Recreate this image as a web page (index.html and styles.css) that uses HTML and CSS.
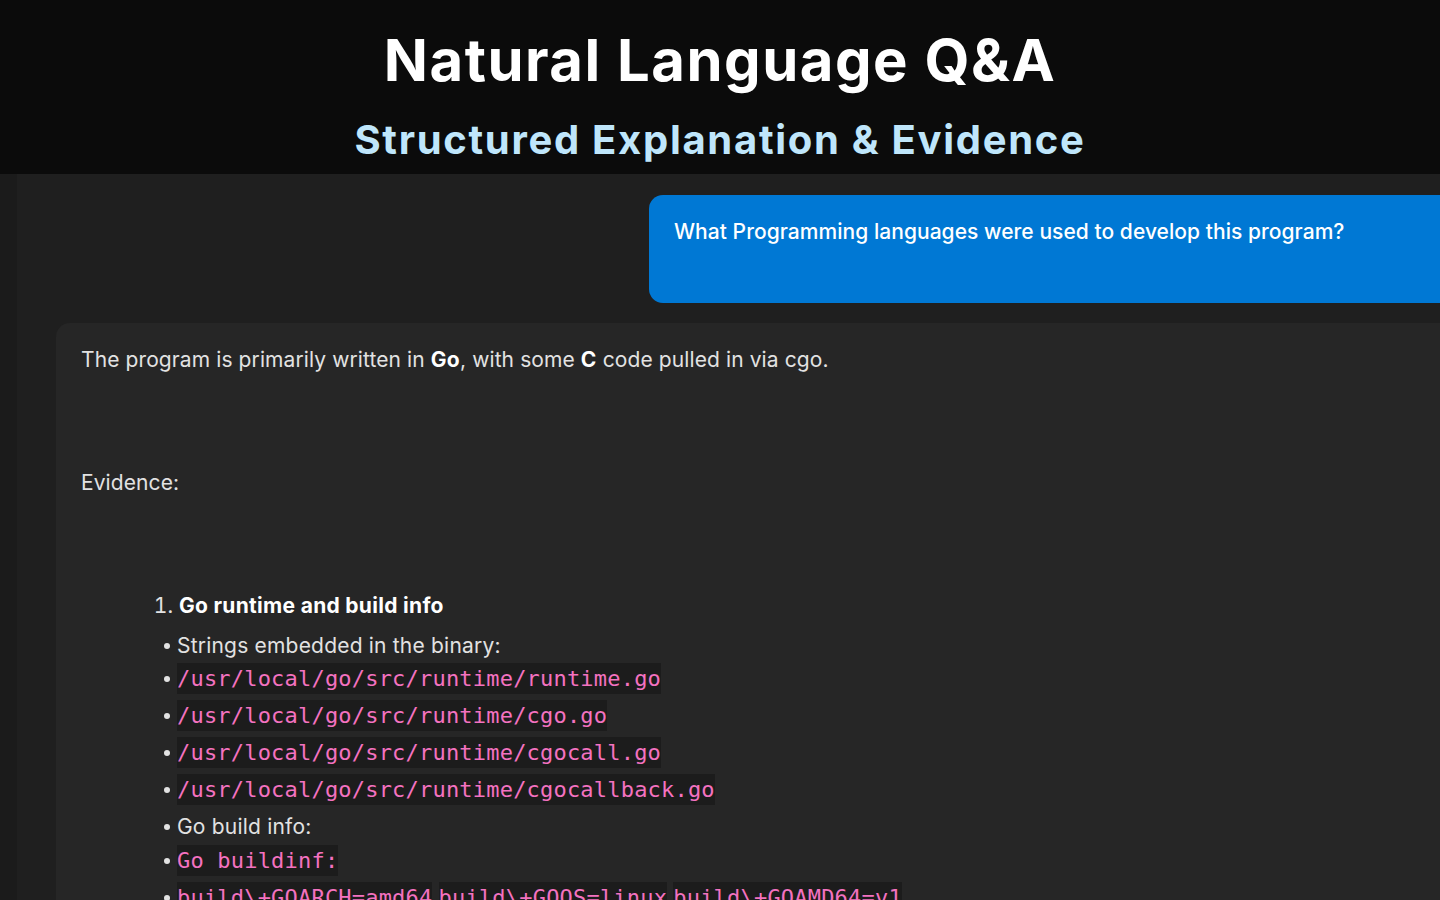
FILE: index.html
```html
<!DOCTYPE html>
<html lang="en">
<head>
    <meta charset="UTF-8">
    <meta name="viewport" content="width=device-width, initial-scale=1.0">
    <title>Natural Language Q&amp;A</title>
    <link rel="stylesheet" href="styles.css">
</head>
<body>
    <header class="hero">
        <h1>Natural Language Q&amp;A</h1>
        <h2>Structured Explanation &amp; Evidence</h2>
    </header>

    <div class="workspace">
        <div class="rail"></div>

        <!-- Chat thread -->
        <main class="chat">
            <div class="bubble-row">
                <div class="bubble">What Programming languages were used to develop this program?</div>
            </div>

            <div class="answer">
                <p>The program is primarily written in <strong>Go</strong>, with some <strong>C</strong> code pulled in via cgo.</p>
                <p class="gap">Evidence:</p>

                <ol class="evidence">
                    <li><strong>Go runtime and build info</strong></li>
                </ol>
                <ul class="points">
                    <li>Strings embedded in the binary:</li>
                    <li><code>/usr/local/go/src/runtime/runtime.go</code></li>
                    <li class="spaced"><code>/usr/local/go/src/runtime/cgo.go</code></li>
                    <li class="spaced"><code>/usr/local/go/src/runtime/cgocall.go</code></li>
                    <li class="spaced"><code>/usr/local/go/src/runtime/cgocallback.go</code></li>
                    <li class="spaced">Go build info:</li>
                    <li class="nudge"><code>Go buildinf:</code></li>
                    <li class="spaced"><code>build\+GOARCH=amd64</code> <code>build\+GOOS=linux</code> <code>build\+GOAMD64=v1</code></li>
                </ul>
            </div>
        </main>
    </div>
</body>
</html>
```

FILE: styles.css
```css
/* Page layout */
html, body {
    margin: 0;
    padding: 0;
    height: 100%;
    overflow: hidden;
    background-color: #1f1f1f;
}

body {
    font-family: Inter, "Noto Sans", sans-serif;
}

/* Top banner */
.hero {
    height: 174px;
    background-color: #0b0b0b;
    text-align: center;
    box-sizing: border-box;
    padding-top: 26px;
}

.hero h1 {
    margin: 0;
    font-size: 58px;
    font-weight: 700;
    line-height: 68px;
    color: #ffffff;
    letter-spacing: 1.5px;
}

.hero h2 {
    margin: 22px 0 0;
    font-size: 40px;
    font-weight: 700;
    line-height: 48px;
    color: #bfe6fb;
    letter-spacing: 1.7px;
}

/* Area under the banner */
.workspace {
    display: flex;
    height: calc(100% - 174px);
}

.rail {
    width: 17px;
    flex-shrink: 0;
    background-color: #1b1b1b;
}

.chat {
    flex: 1;
    min-width: 0;
    padding-top: 21px;
}

.bubble-row {
    display: flex;
    padding-left: 632px;
}

.bubble {
    width: 900px;
    flex-shrink: 0;
    height: 108px;
    box-sizing: border-box;
    padding: 23px 25px;
    background-color: #0078d4;
    border-radius: 14px 0 0 14px;
    color: #ffffff;
    font-size: 21px;
    font-weight: 500;
    letter-spacing: 0.05px;
    line-height: 28px;
}

/* Assistant answer card */
.answer {
    margin: 20px 0 0 39px;
    width: 1500px;
    background-color: #262626;
    border-radius: 14px 0 0 0;
    padding: 22px 25px 0;
    color: #e2e2e2;
    font-size: 21px;
    letter-spacing: 0.1px;
    line-height: 30px;
    min-height: 700px;
    box-sizing: border-box;
}

.answer p {
    margin: 0;
}

.answer strong {
    color: #ffffff;
    font-weight: 700;
    letter-spacing: 0.3px;
}

.answer .gap {
    margin-top: 93px;
}

.evidence {
    margin: 93px 0 0;
    padding-left: 98px;
}

.points {
    list-style: none;
    margin: 8px 0 0;
    padding-left: 80px;
    letter-spacing: 0.2px;
}

.points li {
    position: relative;
    padding-left: 16px;
    line-height: 33px;
    height: 33px;
    white-space: nowrap;
}

.points li.spaced {
    margin-top: 4px;
}

.points li.nudge {
    margin-top: 1px;
}

.points li::before {
    content: "";
    position: absolute;
    left: 3px;
    top: 14px;
    width: 6px;
    height: 6px;
    border-radius: 50%;
    background-color: #e2e2e2;
}

code {
    font-family: "DejaVu Sans Mono", monospace;
    font-size: 22px;
    line-height: 33px;
    letter-spacing: 0.2px;
    color: #f472c0;
    background-color: #1c1c1c;
    padding: 3px 0;
}
```
